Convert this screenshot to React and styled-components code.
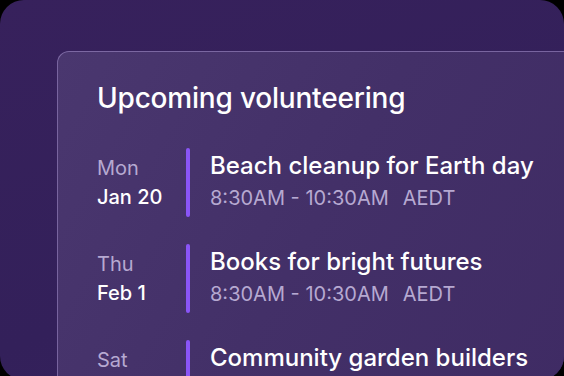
import styled, { createGlobalStyle } from 'styled-components';

const GlobalStyle = createGlobalStyle`
  html, body {
    margin: 0;
    padding: 0;
    background: #000;
    overflow: hidden;
  }
  body {
    font-family: Inter, "Noto Sans", "Liberation Sans", sans-serif;
    -webkit-font-smoothing: antialiased;
  }
`;

const events = [
  { day: 'Mon', date: 'Jan 20', title: 'Beach cleanup for Earth day', time: '8:30AM - 10:30AM', zone: 'AEDT' },
  { day: 'Thu', date: 'Feb 1', title: 'Books for bright futures', time: '8:30AM - 10:30AM', zone: 'AEDT' },
  { day: 'Sat', date: 'Feb 8', title: 'Community garden builders', time: '8:30AM - 10:30AM', zone: 'AEDT' },
];

const App = () => {
  return (
    <>
      <GlobalStyle />
      <Panel>
        <Card>
          <Heading>Upcoming volunteering</Heading>
          <List>
            {events.map((e) => (
              <Row key={e.title}>
                <DateCol>
                  <Day>{e.day}</Day>
                  <DateText>{e.date}</DateText>
                </DateCol>
                <Bar />
                <Info>
                  <Title>{e.title}</Title>
                  <Time>
                    {e.time}
                    <Zone>{e.zone}</Zone>
                  </Time>
                </Info>
              </Row>
            ))}
          </List>
        </Card>
      </Panel>
    </>
  );
};

const Panel = styled.div`
  width: 564px;
  height: 380px;
  border-radius: 24px;
  background: linear-gradient(160deg, #37215c 0%, #33205a 60%, #36225e 100%);
  padding: 51px 0 0 57px;
  box-sizing: border-box;
  overflow: hidden;
`;

const Card = styled.div`
  width: 560px;
  height: 400px;
  box-sizing: border-box;
  border: 1px solid rgba(190, 170, 230, 0.45);
  border-radius: 12px;
  background: linear-gradient(120deg, #4a376f 0%, #433068 45%, #3e2a63 100%);
  padding: 27px 0 0 39px;
`;

const Heading = styled.h1`
  margin: 0;
  color: #ffffff;
  font-size: 28px;
  font-weight: 500;
  line-height: 38px;
  letter-spacing: -0.2px;
`;

const List = styled.div`
  display: flex;
  flex-direction: column;
  gap: 27px;
  margin-top: 31px;
`;

const Row = styled.div`
  display: flex;
  align-items: stretch;
  height: 69px;
`;

const DateCol = styled.div`
  width: 89px;
  display: flex;
  flex-direction: column;
  justify-content: center;
  gap: 5px;
`;

const Day = styled.div`
  color: #b6a9d1;
  font-size: 20px;
  line-height: 24px;
`;

const DateText = styled.div`
  color: #ffffff;
  font-size: 20px;
  font-weight: 500;
  line-height: 24px;
`;

const Bar = styled.div`
  width: 4px;
  border-radius: 2px;
  background: #8a55f7;
`;

const Info = styled.div`
  display: flex;
  flex-direction: column;
  justify-content: center;
  gap: 5px;
  padding: 0 0 5px 20px;
`;

const Title = styled.div`
  color: #ffffff;
  font-size: 24px;
  font-weight: 500;
  line-height: 30px;
  white-space: nowrap;
`;

const Time = styled.div`
  color: #b6a9d1;
  font-size: 20px;
  line-height: 24px;
  white-space: nowrap;
`;

const Zone = styled.span`
  margin-left: 14px;
`;

export default App;
